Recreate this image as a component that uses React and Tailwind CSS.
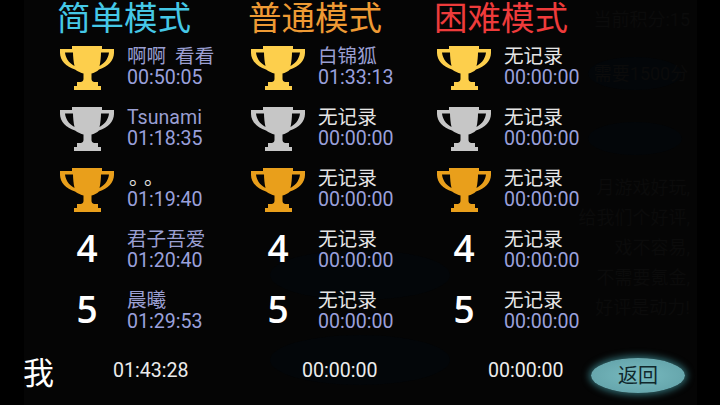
const sans = "font-['Roboto','Noto_Sans_CJK_SC',sans-serif]";

const modes = [
  {
    title: "简单模式",
    titleColor: "text-[#45c8e6]",
    width: "w-[191px]",
    rows: [
      { name: "啊啊 看看", time: "00:50:05", tint: true },
      { name: "Tsunami", time: "01:18:35", tint: true },
      { name: "。。", time: "01:19:40", dots: true },
      { name: "君子吾爱", time: "01:20:40", tint: true },
      { name: "晨曦", time: "01:29:53", tint: true },
    ],
  },
  {
    title: "普通模式",
    titleColor: "text-[#ee9a34]",
    width: "w-[186px]",
    rows: [
      { name: "白锦狐", time: "01:33:13", tint: true },
      { name: "无记录", time: "00:00:00" },
      { name: "无记录", time: "00:00:00" },
      { name: "无记录", time: "00:00:00" },
      { name: "无记录", time: "00:00:00" },
    ],
  },
  {
    title: "困难模式",
    titleColor: "text-[#ee3b3b]",
    width: "w-[153px]",
    rows: [
      { name: "无记录", time: "00:00:00" },
      { name: "无记录", time: "00:00:00" },
      { name: "无记录", time: "00:00:00" },
      { name: "无记录", time: "00:00:00" },
      { name: "无记录", time: "00:00:00" },
    ],
  },
];

const medals = ["#fdcf4c", "#c6c6c6", "#e99f1b"];

// text of the dimmed page behind the dialog
const behindNotes = ["月游戏好玩,", "给我们个好评,", "戏不容易,", "不需要氪金,", "好评是动力!"];

function Trophy({ color }) {
  return (
    <svg width="54" height="44" viewBox="0 0 54 44">
      <path
        fillRule="evenodd"
        fill={color}
        d="M12 0H42V3H54V7C54 14 48 21 39 23.500C37 25.500 34 27 31.500 27.500V33C31.500 34.500 32.500 35.500 34 36H38V40H41V44H14V40H17V36H21C22.500 35.500 23.500 34.500 23.500 33V27.500C21 27 18 25.500 15 23.500C6 21 0 14 0 7V3H12ZM13 6.500H5C5.500 11 8 16.500 14.500 20C13.500 16 13 10 13 6.500ZM41 6.500H49C48.500 11 46 16.500 39.500 20C40.500 16 41 10 41 6.500Z"
      />
    </svg>
  );
}

function Rank({ index, color }) {
  if (index < 3) return <Trophy color={color} />;
  return (
    <div className="-mt-[3px] w-[54px] text-center font-['Open_Sans',sans-serif] text-[37px] leading-[44px] font-semibold text-white">
      {index + 1}
    </div>
  );
}

function ModeColumn({ mode }) {
  return (
    <div className={`flex flex-col ${mode.width}`}>
      <div className={`-ml-[3px] h-[46px] text-[33.500px] leading-[38px] whitespace-nowrap ${mode.titleColor}`}>
        {mode.title}
      </div>
      {mode.rows.map((row, i) => (
        <div key={i} className="flex h-[61px] gap-[13px]">
          <Rank index={i} color={medals[i]} />
          <div className="flex flex-col gap-px text-[19.600px] whitespace-nowrap">
            <div
              className={`leading-[22px] [word-spacing:4px] ${row.tint ? "text-[#9a9fd2]" : "text-[#e6e6e6]"} ${
                row.dots ? "ml-[2px] tracking-[-4.600px] [text-spacing-trim:space-all]" : ""
              }`}
            >
              {row.name}
            </div>
            <div className="leading-[18px] text-[#9aa0dc]">{row.time}</div>
          </div>
        </div>
      ))}
    </div>
  );
}

function BehindPage() {
  return (
    <div className="absolute inset-0 flex justify-end gap-[115px] text-[18px] leading-[18px] whitespace-nowrap text-[#0b0b0b]">
      <div className="flex flex-col gap-[35px] pt-[250px]">
        <div className="h-[50px] w-[180px] rounded-[50%] bg-[#030609]" />
        <div className="h-[50px] w-[180px] rounded-[50%] bg-[#030609]" />
      </div>
      <div className="flex w-[132px] flex-col items-end pt-[11px] pr-[7px]">
        <div>当前积分:15</div>
        <div className="mt-[28px] mr-[8px] flex h-[33px] w-[94px] items-center justify-center rounded-[50%] bg-[#030609] pl-[12px]">
          需要1500分
        </div>
        <div className="mt-[32px] mr-[8px] h-[33px] w-[94px] rounded-[50%] bg-[#030609]" />
        <div className="mt-[24px] flex flex-col items-end gap-[12px]">
          {behindNotes.map((line) => (
            <div key={line}>{line}</div>
          ))}
        </div>
      </div>
    </div>
  );
}

export default function App() {
  return (
    <div className={`h-[405px] w-[720px] overflow-hidden bg-black pl-[24px] ${sans}`}>
      <div className="relative h-full w-[673px] bg-[#050505]">
        <BehindPage />
        <div className="relative flex flex-col">
          <div className="flex pl-[36px]">
            {modes.map((mode) => (
              <ModeColumn key={mode.title} mode={mode} />
            ))}
          </div>
          <div className="flex items-start pt-[8px] text-[19.600px] leading-[24px] text-[#ececec]">
            <div className="-mt-[4px] -ml-px w-[90px] text-[31px] leading-[38px] text-white">我</div>
            <div className="w-[189px]">01:43:28</div>
            <div className="w-[186px]">00:00:00</div>
            <div className="w-[103px]">00:00:00</div>
            <button className="-mt-px flex h-[35px] w-[94px] items-center justify-center rounded-[50%] bg-[radial-gradient(ellipse_at_center,#78babf,#5f9ea5)] text-[20px] text-[#10282c] shadow-[0_0_7px_2px_#2f6a70]">
              返回
            </button>
          </div>
        </div>
      </div>
    </div>
  );
}
